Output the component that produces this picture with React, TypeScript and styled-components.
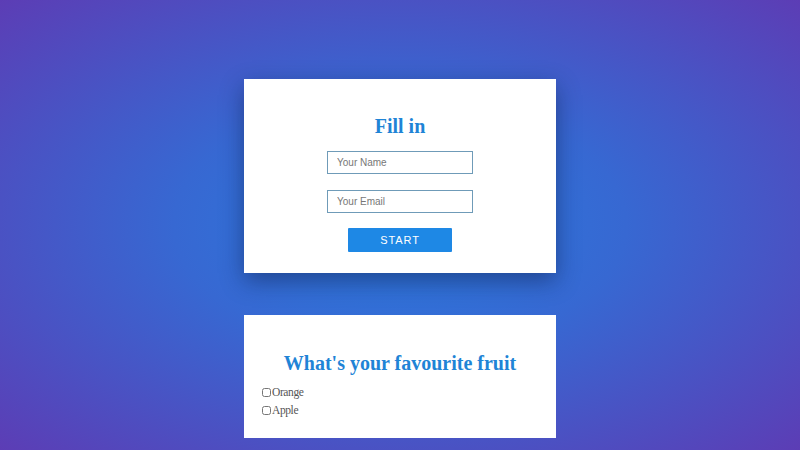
import React from 'react'
import styled, { createGlobalStyle } from 'styled-components'

const GlobalStyle = createGlobalStyle`
    html, body {
        margin: 0;
        padding: 0;
        height: 100%;
    }
    body {
        background: radial-gradient(ellipse at center, #2a7ade 0%, #3768d2 40%, #5c3db5 100%);
        background-attachment: fixed;
        font-family: 'Liberation Serif', serif;
        overflow: hidden;
    }
`

const App: React.FC = () => {
    const [fruits, setFruits] = React.useState<Array<string>>([])

    const toggleFruit = (fruit: string) => {
        setFruits((prev) =>
            prev.includes(fruit) ? prev.filter((f) => f !== fruit) : [...prev, fruit]
        )
    }

    return (
        <React.Fragment>
            <GlobalStyle />
            <Page>
                <FormCard>
                    <Title>Fill in</Title>
                    <Input type="text" placeholder="Your Name" />
                    <Input type="email" placeholder="Your Email" />
                    <StartButton>START</StartButton>
                </FormCard>

                <QuestionCard>
                    <Title>What's your favourite fruit</Title>
                    <Options>
                        {['Orange', 'Apple'].map((fruit) => (
                            <Option key={fruit}>
                                <Checkbox
                                    type="checkbox"
                                    checked={fruits.includes(fruit)}
                                    onChange={() => toggleFruit(fruit)}
                                />
                                {fruit}
                            </Option>
                        ))}
                    </Options>
                </QuestionCard>
            </Page>
        </React.Fragment>
    )
}

export default App

const Page = styled.div`
    display: flex;
    flex-direction: column;
    align-items: center;
    gap: 42px;
    padding-top: 79px;
`

const Card = styled.div`
    width: 312px;
    box-sizing: border-box;
    background: #ffffff;
`

const FormCard = styled(Card)`
    display: flex;
    flex-direction: column;
    align-items: center;
    height: 194px;
    padding-top: 35px;
    box-shadow: 0 8px 22px rgba(10, 20, 60, 0.45);
`

const QuestionCard = styled(Card)`
    height: 123px;
    padding: 36px 18px 0 18px;
`

const Title = styled.h1`
    margin: 0 0 13px 0;
    font-family: 'Liberation Serif', serif;
    font-size: 20px;
    line-height: 24px;
    font-weight: 700;
    color: #1f84d6;
    text-align: center;
    white-space: nowrap;
`

const Input = styled.input`
    width: 146px;
    height: 23px;
    box-sizing: border-box;
    margin-bottom: 16px;
    padding: 0 9px;
    border: 1px solid #6f9bb8;
    font-family: 'Liberation Sans', Arial, sans-serif;
    font-size: 10px;
    outline: none;

    &::placeholder {
        color: #777777;
    }
`

const StartButton = styled.button`
    width: 104px;
    height: 24px;
    margin-top: -1px;
    border: none;
    border-radius: 1px;
    background: #1e88e5;
    color: #ffffff;
    font-family: 'Liberation Sans', Arial, sans-serif;
    font-size: 11px;
    letter-spacing: 0.9px;
    cursor: pointer;
`

const Options = styled.div`
    display: flex;
    flex-direction: column;
    margin-top: -5px;
`

const Option = styled.label`
    display: flex;
    align-items: center;
    height: 18px;
    font-size: 11.5px;
    letter-spacing: -0.4px;
    color: #555555;
    cursor: pointer;
`

const Checkbox = styled.input`
    width: 9px;
    height: 9px;
    margin: 0 1px 0 0;
`
